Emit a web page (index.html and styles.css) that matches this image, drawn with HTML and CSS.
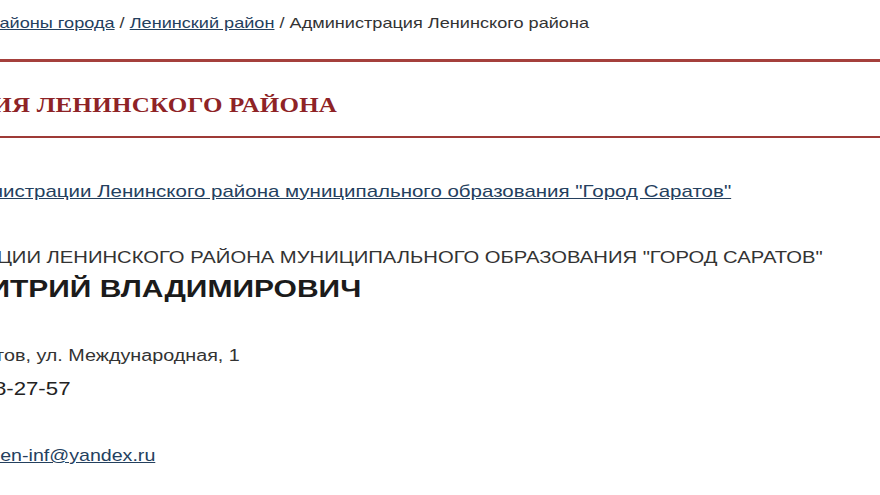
FILE: index.html
```html
<!DOCTYPE html>
<html lang="ru">
<head>
    <meta charset="UTF-8">
    <title>Администрация Ленинского района</title>
    <link rel="stylesheet" href="styles.css">
</head>
<body>
<div class="page">
    <div class="crumbs">
        <a href="#">Главная</a> / <a href="#">Управление</a> / <a href="#">Районы города</a> / <a href="#">Ленинский район</a> / Администрация Ленинского района
    </div>
    <h1 class="title">Администрация Ленинского района</h1>
    <p class="site"><a href="#">Ссылка на сайт администрации Ленинского района муниципального образования "Город Саратов"</a></p>
    <div class="post">Глава администрации Ленинского района муниципального образования "Город Саратов"</div>
    <div class="name">Лебедев Дмитрий Владимирович</div>
    <p class="addr">Адрес: 410012, г. Саратов, ул. Международная, 1</p>
    <p class="phone">Телефон: 8 (8452) 48-27-57</p>
    <p class="mail">Email для обращений: <a href="mailto:len-inf@yandex.ru">len-inf@yandex.ru</a></p>
</div>
</body>
</html>
```

FILE: styles.css
```css
*{
    padding: 0;
    margin: 0;
}
body{
    width: 880px;
    height: 495px;
    overflow: hidden;
    background: #fff;
    color: #333;
    font-family: "Liberation Sans", Arial, sans-serif;
}
a{
    color: #24405e;
}
/*страница сдвинута влево и растянута по ширине*/
.page{
    width: 1000px;
    margin-left: -212px;
    transform: scaleX(1.25);
    transform-origin: 0 0;
}
.crumbs{
    font-size: 14.5px;
    line-height: 20px;
    padding-top: 13px;
    padding-bottom: 26px;
    border-bottom: 3px solid #a5403c;
}
.title{
    font-family: "Liberation Serif", "Times New Roman", serif;
    font-size: 20px;
    line-height: 24px;
    letter-spacing: 0.2px;
    font-weight: bold;
    text-transform: uppercase;
    color: #8e2326;
    padding: 31px 0 19px 0;
    border-bottom: 2px solid #9e3a36;
}
.site{
    font-size: 16.4px;
    line-height: 20px;
    margin-top: 43px;
}
.post{
    font-size: 16.2px;
    line-height: 20px;
    text-transform: uppercase;
    margin-top: 46px;
}
.name{
    font-size: 24px;
    line-height: 28px;
    font-weight: bold;
    text-transform: uppercase;
    color: #1b1b1b;
    margin-top: 8px;
}
.addr{
    font-size: 15.8px;
    line-height: 20px;
    margin-top: 43px;
}
.phone{
    font-size: 17.8px;
    line-height: 24px;
    color: #222;
    margin-top: 11px;
}
.mail{
    font-size: 15.7px;
    line-height: 20px;
    margin-top: 45px;
}
```
